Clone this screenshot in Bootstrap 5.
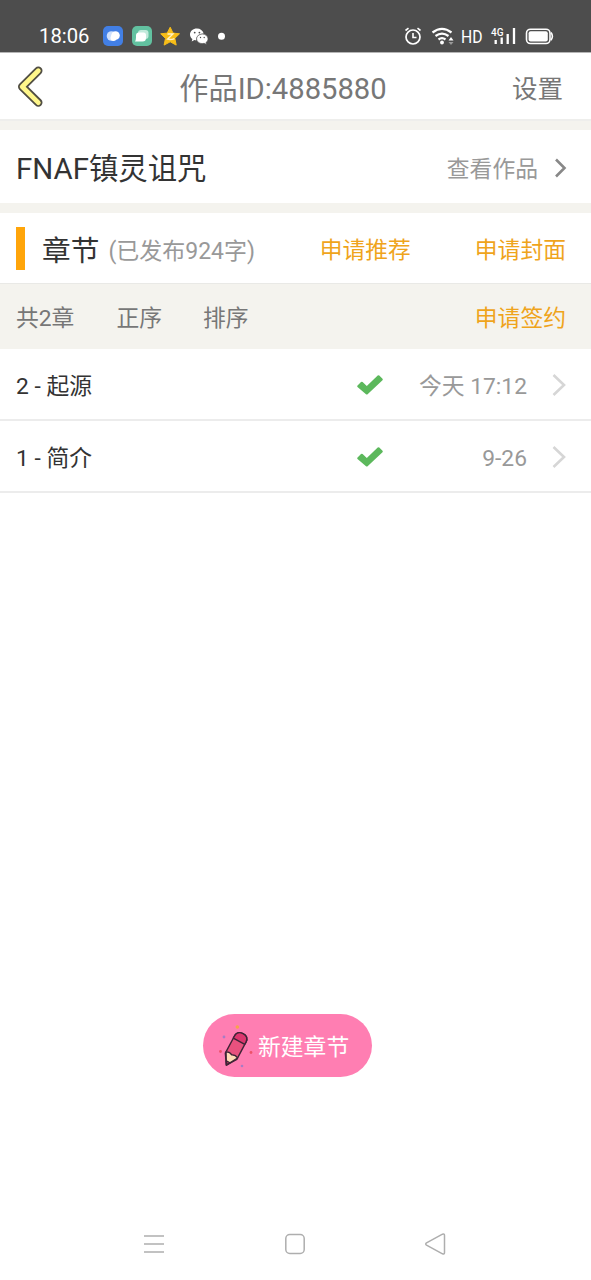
<!DOCTYPE html>
<html lang="zh-CN">
<head>
<meta charset="utf-8">
<meta name="viewport" content="width=device-width, initial-scale=1">
<title>作品管理</title>
<link href="https://cdn.jsdelivr.net/npm/bootstrap@5.3.0/dist/css/bootstrap.min.css" rel="stylesheet">
<style>
body{font-family:Roboto,"Noto Sans CJK SC",sans-serif;font-size:22.8px;line-height:1;color:#333;background:#fff}
svg{display:block;flex:none}
.phone{height:1280px;overflow:hidden}
.statusbar{height:52px;background:#4d4d4d;color:#fff;padding:20px 37px 0 39px}
.statusbar>*{height:32px}
.clock{font-size:20.3px;width:64px;padding-top:1px}
.topbar{height:69px;border-bottom:2px solid #eeeeec;border-top:1px solid #b5b5b5;padding:2px 28px 0 16px;color:#777}
.topbar h1{font-size:29.2px;margin:5px 8px 0 0;font-weight:400}
.side{width:46px}
.settings{font-size:25.5px;padding-top:5px}
.gap-band{height:10px;background:#f4f3ee}
.band-top{height:9px}
.workrow{height:73px;padding:3px 24px 0 16px}
.workrow span{padding-top:4px}
.worktitle{font-size:29.4px;color:#333}
.soft{color:#999}
.chaprow{height:70px;padding:0 25px 0 16px}
.chaprow .soft,.chaprow .accent{padding-top:6px}
.marker{width:9px;height:43px;background:#ffa50a;margin-right:17px}
.heading{font-size:28.7px;margin:6px 9px 0 0;font-weight:400}
.soft.count{font-size:23px}
.accent{color:#efa41c;text-decoration:none}
.toolrow{height:66px;background:#f4f3ee;border-top:1px solid #e9e9e6;color:#777;padding:6px 25px 0 16px}
.order{margin:0 41px 0 42px}
.chapter{height:72px;border-bottom:2px solid #ececec;padding:2px 25px 0 16px;color:#333}
.chapter span{padding-top:4px}
.when{width:143px;text-align:right;color:#999;margin-right:25px}
.spacer{height:521px}
.newbtn,.newbtn:hover{width:169px;height:63px;background:#ff7eb2;color:#fff;margin-left:203px;font-size:22.8px;line-height:1;border:0;padding:0 0 0 12px}
.newbtn span{margin-left:3px;padding-top:5px}
.navkeys{margin-top:155px;padding:0 145px 0 143px}
</style>
</head>
<body>
<div class="phone">
  <div class="statusbar d-flex justify-content-between">
    <div class="d-flex align-items-center">
      <span class="clock">18:06</span>
      <svg width="126" height="32" viewBox="103 20 126 32">
        <rect x="103" y="26" width="20" height="20" rx="5" fill="#427fe5"/>
        <circle cx="111.500" cy="36" r="4.800" fill="#cfe0fb"/><circle cx="115.500" cy="35.500" r="4.300" fill="#fff"/><circle cx="113.500" cy="38" r="3" fill="#fff"/>
        <rect x="132" y="26" width="20" height="20" rx="5" fill="#62c1a0"/>
        <rect x="138" y="30" width="10.500" height="9" rx="3" fill="#c2eadc"/><path d="M139 32.500h4.500q2.500 0 2.500 2.500v3q0 3.500-3.500 3.500h-7.500q1-1.500 1-4v-2q0-3 3-3Z" fill="#fff"/>
        <path d="M170.200 27.200l2.800 5.900 6.500.7-4.700 4.500 1.400 6.800-6-3.300-6.100 3.300 1.400-6.700-4.800-4.600 6.500-.7Z" fill="#f7bd18" stroke="#f7bd18" stroke-width="1" stroke-linejoin="round"/>
        <path d="M167.500 34h5.500l-5.500 5.200q3.500.8 7-.6" fill="none" stroke="#fff3c8" stroke-width="1.300"/>
        <path d="M197 28.500c-4 0-7 2.600-7 6 0 1.900.9 3.500 2.400 4.600l-.7 2.300 2.700-1.400 2 .4c-.6-4 2.300-6.700 7.300-6.900-.8-3-3.500-5-6.700-5Z" fill="#fff"/>
        <path d="M202.300 34.100c-3.300 0-5.700 2.100-5.700 4.700s2.400 4.800 5.700 4.800l1.900-.3 2.300 1.300-.6-2c1.300-.9 2.100-2.200 2.100-3.700 0-2.700-2.500-4.800-5.700-4.800Z" fill="#fff" stroke="#4d4d4d" stroke-width=".6"/>
        <g fill="#4d4d4d"><circle cx="194.700" cy="32.600" r=".9"/><circle cx="199.400" cy="32.600" r=".9"/><circle cx="200.500" cy="37.500" r=".7"/><circle cx="204.200" cy="37.500" r=".7"/></g>
        <circle cx="221.500" cy="36.200" r="3.500" fill="#fff"/>
      </svg>
    </div>
    <svg width="150" height="32" viewBox="404 20 150 32" fill="none" stroke="#fff">
      <circle cx="413" cy="37" r="7" stroke-width="1.700"/><path d="M413 33v4.500h3.500M405.500 30.500l3-2.300M420.500 30.500l-3-2.300" stroke-width="1.600"/>
      <path d="M432.500 32.500q9.500-7.200 19 0M435.500 36q6.500-4.800 13 0M438.500 39.500q3.500-2.600 7 0" stroke-width="2.200"/><circle cx="442" cy="42.500" r="1.900" fill="#fff" stroke="none"/>
      <path d="M448.500 40.500l2.500-3.500 2.500 3.500Z" fill="#fff" stroke="none"/><path d="M448.500 42l2.500 3 2.500-3Z" fill="#999" stroke="none"/>
      <text x="461" y="43" font-size="18.500" textLength="21.500" lengthAdjust="spacingAndGlyphs" fill="#fff" stroke="none">HD</text>
      <text x="491" y="36.300" font-size="11" font-weight="500" textLength="12.500" lengthAdjust="spacingAndGlyphs" fill="#fff" stroke="none">4G</text>
      <path d="M495.700 40v4M501.700 37.500v6.500M507.700 34v10M514 28v16" stroke-width="2.300"/>
      <rect x="526.500" y="29.200" width="23.500" height="14.300" rx="4" stroke-width="1.600"/><rect x="528.600" y="31.200" width="19.200" height="10.300" rx="2" fill="#fff" stroke="none"/><path d="M551 32.500q2.800 3.800 0 7.800" stroke-width="1.600"/>
    </svg>
  </div>

  <nav class="topbar d-flex align-items-center justify-content-between">
    <a href="#" class="side" aria-label="返回"><svg width="30" height="42" viewBox="0 0 30 42" fill="none" stroke-linecap="round" stroke-linejoin="round"><path d="M22.300 4.800L6.200 20.700l16.100 15.900" stroke="#514e43" stroke-width="8.400"/><path d="M22.300 4.800L6.200 20.700l16.100 15.900" stroke="#fff78a" stroke-width="4.800"/></svg></a>
    <h1>作品ID:4885880</h1>
    <span class="settings">设置</span>
  </nav>
  <div class="gap-band band-top"></div>

  <section class="workrow d-flex align-items-center">
    <span class="worktitle me-auto">FNAF镇灵诅咒</span>
    <span class="soft">查看作品</span>
    <svg class="ms-3" width="13" height="20" viewBox="0 0 13 20" fill="none" stroke="#888" stroke-width="2.600"><path d="M2 1.500L10.500 10 2 18.500"/></svg>
  </section>
  <div class="gap-band"></div>

  <section class="chaprow d-flex align-items-center">
    <span class="marker"></span>
    <h2 class="heading">章节</h2>
    <span class="soft count me-auto">(已发布924字)</span>
    <a href="#" class="accent">申请推荐</a>
    <a href="#" class="accent ms-5 ps-3">申请封面</a>
  </section>
  <section class="toolrow d-flex align-items-center">
    <span>共2章</span><span class="order">正序</span><span class="me-auto">排序</span>
    <a href="#" class="accent">申请签约</a>
  </section>

  <div class="list-group list-group-flush">
    <div class="chapter d-flex align-items-center">
      <span class="me-auto">2 - 起源</span>
      <svg width="28" height="22" viewBox="0 0 28 22"><path d="M1.500 11.500l3.500-3.500q.8-.6 1.600 0l4.200 4.100L21.700 1.500q.8-.7 1.600 0l3.200 3.200q.7.8 0 1.600L11.600 20.200q-.8.7-1.600 0L1.500 13q-.7-.8 0-1.500Z" fill="#5cb85c"/></svg>
      <span class="when">今天 17:12</span>
      <svg width="14" height="24" viewBox="0 0 14 24" fill="none" stroke="#d6d6d6" stroke-width="2.600"><path d="M1.500 2L12 12 1.500 22"/></svg>
    </div>
    <div class="chapter d-flex align-items-center">
      <span class="me-auto">1 - 简介</span>
      <svg width="28" height="22" viewBox="0 0 28 22"><path d="M1.500 11.500l3.500-3.500q.8-.6 1.600 0l4.200 4.100L21.700 1.500q.8-.7 1.600 0l3.200 3.200q.7.8 0 1.600L11.600 20.200q-.8.7-1.600 0L1.500 13q-.7-.8 0-1.500Z" fill="#5cb85c"/></svg>
      <span class="when">9-26</span>
      <svg width="14" height="24" viewBox="0 0 14 24" fill="none" stroke="#d6d6d6" stroke-width="2.600"><path d="M1.500 2L12 12 1.500 22"/></svg>
    </div>
  </div>

  <div class="spacer"></div>
  <button type="button" class="btn newbtn rounded-pill d-flex align-items-center">
    <svg width="40" height="50" viewBox="215 1020 40 50"><g transform="translate(235.300 1047.300) rotate(28)" stroke="#3e2436" stroke-width="1.400" stroke-linejoin="round"><path d="M-6.500-10.500q0-6 6.500-6t6.500 6V9L0 19-6.500 9Z" fill="#e8517e"/><path d="M-6.500-10.500q0-6 6.500-6t6.500 6v2.500h-13Z" fill="#dc366e"/><path d="M-6.500 7.500q3.200-2 6.500 0 3.300-2 6.500 0L0 19Z" fill="#ffdcb5"/><path d="M-2 15.300h4L0 18.500Z" fill="#dc366e"/></g><circle cx="237.300" cy="1026" r="1.800" fill="#f5a54a"/><circle cx="224" cy="1036" r="1.400" fill="#a87cc5"/><circle cx="242" cy="1065" r="1.300" fill="#a87cc5"/><circle cx="220.500" cy="1050.500" r="1.400" fill="#ed5269"/><circle cx="251" cy="1051.500" r="1.400" fill="#ed5269"/></svg>
    <span>新建章节</span>
  </button>

  <div class="navkeys d-flex align-items-center justify-content-between">
    <svg width="22" height="24" viewBox="0 0 22 24" stroke="#aeaeae" stroke-width="1.500"><path d="M1 4h20M1 12h20M1 20h20"/></svg>
    <svg width="22" height="24" viewBox="0 0 22 24" fill="none" stroke="#aeaeae" stroke-width="1.500"><rect x="1.800" y="2.500" width="18.400" height="19" rx="4"/></svg>
    <svg width="22" height="24" viewBox="0 0 22 24" fill="none" stroke="#aeaeae" stroke-width="1.500" stroke-linejoin="round"><path d="M18.500 2.200L2.500 10.800q-1.500 1.200 0 2.400L18.500 21.800q2 .6 2-1.300v-17q0-1.900-2-1.300Z"/></svg>
  </div>
</div>
<script src="https://cdn.jsdelivr.net/npm/bootstrap@5.3.0/dist/js/bootstrap.bundle.min.js"></script>
</body>
</html>
